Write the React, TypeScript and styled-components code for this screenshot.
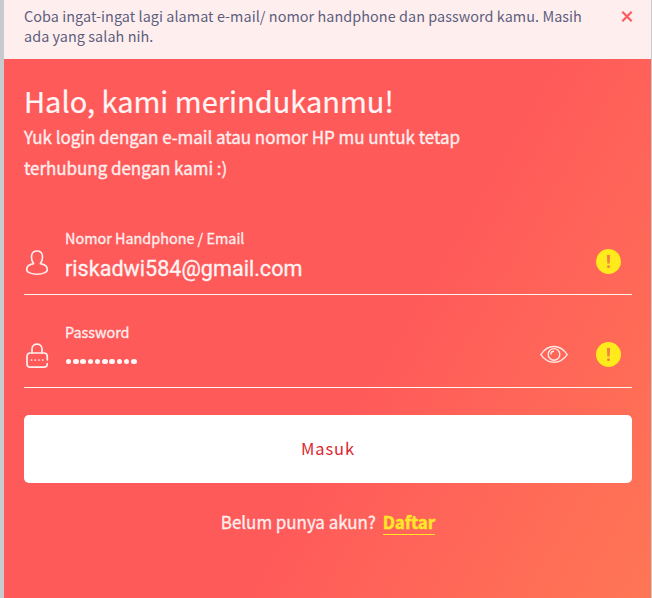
import React from "react";
import styled, { createGlobalStyle } from "styled-components";

const GlobalStyle = createGlobalStyle`
  * { box-sizing: border-box; }
  body {
    margin: 0;
    overflow: hidden;
    background: #c9c9cd;
    font-family: "Noto Sans CJK SC", "Open Sans", sans-serif;
  }
`;

const Page = styled.main`
  display: flex;
  height: 598px;
  width: 652px;
  padding: 0 1px 0 4px;
  background: #c9cacd;
`;

const Modal = styled.section`
  display: flex;
  flex-direction: column;
  flex: 1;
`;

const Notice = styled.div`
  display: flex;
  justify-content: space-between;
  height: 59px;
  padding: 6px 18px 0 20px;
  background: #ffeeee;
`;

const NoticeText = styled.p`
  margin: 0;
  width: 570px;
  color: #5c5f7e;
  font-size: 14.4px;
  letter-spacing: 0.06px;
  line-height: 20px;
`;

const Close = styled.button`
  display: flex;
  height: 13px;
  margin-top: 4px;
  padding: 0;
  border: 0;
  background: none;
`;

const Panel = styled.div`
  display: flex;
  flex-direction: column;
  flex: 1;
  padding: 21px 19px 0 20px;
  background: linear-gradient(120deg, #ff5a5a 0%, #ff5a5a 57%, #ff7655 100%);
  color: #ffefef;
`;

const Title = styled.h1`
  margin: 0 0 1px;
  font-size: 29px;
  font-weight: 400;
  line-height: 40px;
  color: #fff6f5;
  -webkit-text-stroke: 0.2px currentColor;
`;

const Intro = styled.p`
  margin: 0 0 45px;
  width: 470px;
  font-size: 17px;
  letter-spacing: -0.04px;
  line-height: 31px;
  -webkit-text-stroke: 0.35px currentColor;
`;

const Field = styled.div`
  display: flex;
  height: 67px;
  margin-bottom: 26px;
  border-bottom: 1px solid #fff3f0;
`;

const IconSlot = styled.div`
  width: 41px;
  padding-top: 21px;
`;

const FieldBody = styled.div<{ $offset?: number }>`
  flex: 1;
  padding-top: ${({ $offset = 0 }) => $offset}px;
`;

const Label = styled.div`
  height: 22px;
  font-size: 14.4px;
  line-height: 20px;
  -webkit-text-stroke: 0.3px currentColor;
`;

const Email = styled.div`
  color: #fff4f3;
  font-family: Roboto, sans-serif;
  font-size: 21.6px;
  line-height: 37px;
  -webkit-text-stroke: 0.3px currentColor;
`;

const Dots = styled.div`
  display: flex;
  gap: 1.85px;
  padding-top: 15px;
  padding-left: 1px;
`;

const Dot = styled.span`
  width: 5.4px;
  height: 5.4px;
  border-radius: 50%;
  background: #fff6f5;
`;

const Actions = styled.div`
  display: flex;
  gap: 28px;
  padding: 21px 11px 0 0;
`;

const Submit = styled.button`
  height: 68px;
  margin-top: 1px;
  padding: 0 0 1px;
  border: 0;
  border-radius: 5px;
  background: #fff;
  color: #dc2830;
  font: 400 16.5px/67px "Noto Sans CJK SC", sans-serif;
  letter-spacing: 0.85px;
`;

const Register = styled.div`
  display: flex;
  justify-content: center;
  gap: 7px;
  margin-top: 27px;
  font-size: 17px;
  letter-spacing: -0.05px;
  line-height: 24px;
  -webkit-text-stroke: 0.3px currentColor;
`;

const RegisterLink = styled.a`
  height: 25px;
  border-bottom: 1px solid #ffe629;
  color: #ffe629;
  font-weight: 700;
  -webkit-text-stroke: 0.5px currentColor;
`;

const CloseIcon = () => (
  <svg width="12" height="13" viewBox="0 0 12 13" fill="none" stroke="#fb5a60" strokeWidth="2.2">
    <path d="M1.3 1.8 10.7 11.2M10.7 1.8 1.3 11.2" />
  </svg>
);

const UserIcon = () => (
  <svg width="26" height="28" viewBox="0 0 26 28" fill="none" stroke="#fff0ef" strokeWidth="1.6" strokeLinejoin="round">
    <path d="M9.6 14.6C5.2 15.4 2.7 17.6 2.7 20.4C2.7 23.3 7.2 25.2 13 25.2S23.3 23.3 23.3 20.4C23.3 17.6 20.8 15.4 16.4 14.6C17.7 13.1 18.5 10.9 18.5 8.3C18.5 4.3 16.2 2 13 2S7.5 4.3 7.5 8.3C7.5 10.9 8.3 13.1 9.6 14.6Z" />
  </svg>
);

const LockIcon = () => (
  <svg width="26" height="28" viewBox="0 0 26 28" fill="none" stroke="#fff0ef" strokeWidth="1.7" strokeLinecap="round">
    <path d="M8 11V7C8 0.5 18 0.5 18 7V11" />
    <path d="M23.3 17.8V14.5Q23.3 11 19.8 11H6.5Q3 11 3 14.5V21.7Q3 25.2 6.5 25.2H19.8Q23.3 25.2 23.3 21.7" />
    <path d="M7.5 18H7.6M11.2 18H11.3M14.9 18H15M18.6 18H18.7" />
  </svg>
);

const EyeIcon = () => (
  <svg width="28" height="26" viewBox="0 0 28 26" fill="none" stroke="#ffeae6" strokeWidth="1.4">
    <path d="M.8 12.6C8 1.8 20 1.8 27.2 12.6C20 22.8 8 22.8.8 12.6Z" strokeLinejoin="round" />
    <circle cx="14" cy="12.4" r="5.8" />
    <path d="M10.8 12.6Q10.8 9.4 14 9.3" />
  </svg>
);

const WarningIcon = () => (
  <svg width="25" height="25" viewBox="0 0 25 25">
    <circle cx="12.5" cy="12.5" r="12.5" fill="#ffeb1c" />
    <path d="M10.9 6H14.1L13.7 14.5H11.3Z" fill="#f58045" />
    <rect x="11.1" y="16.3" width="2.8" height="2.6" rx="1" fill="#f58045" />
  </svg>
);

export default function App() {
  return (
    <>
      <GlobalStyle />
      <Page>
        <Modal>
          <Notice role="alert">
            <NoticeText>
              Coba ingat-ingat lagi alamat e-mail/ nomor handphone dan password kamu. Masih
              <br />
              ada yang salah nih.
            </NoticeText>
            <Close aria-label="Tutup"><CloseIcon /></Close>
          </Notice>
          <Panel>
            <Title>Halo, kami merindukanmu!</Title>
            <Intro>
              Yuk login dengan e-mail atau nomor HP mu untuk tetap
              <br />
              terhubung dengan kami :)
            </Intro>
            <Field>
              <IconSlot><UserIcon /></IconSlot>
              <FieldBody>
                <Label>Nomor Handphone / Email</Label>
                <Email>riskadwi584@gmail.com</Email>
              </FieldBody>
              <Actions><WarningIcon /></Actions>
            </Field>
            <Field>
              <IconSlot><LockIcon /></IconSlot>
              <FieldBody $offset={1}>
                <Label>Password</Label>
                <Dots>
                  {Array.from({ length: 10 }, (_, i) => <Dot key={i} />)}
                </Dots>
              </FieldBody>
              <Actions><EyeIcon /><WarningIcon /></Actions>
            </Field>
            <Submit>Masuk</Submit>
            <Register>
              <span>Belum punya akun?</span>
              <RegisterLink>Daftar</RegisterLink>
            </Register>
          </Panel>
        </Modal>
      </Page>
    </>
  );
}
